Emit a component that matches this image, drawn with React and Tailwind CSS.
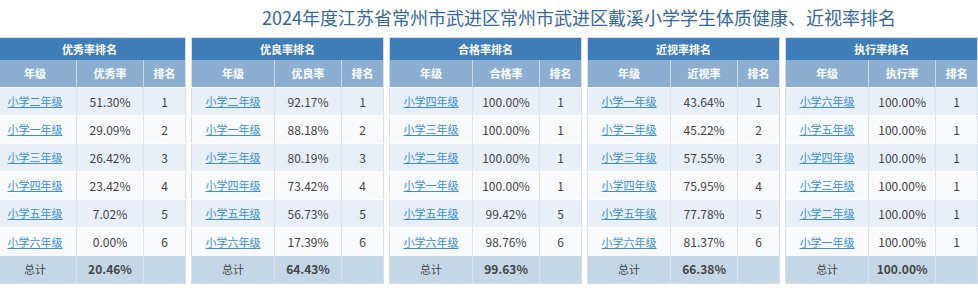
import React from 'react';

// Ranking tables shown under the title
const TABLES = [
  {
    title: '优秀率排名',
    rateLabel: '优秀率',
    total: '20.46%',
    rows: [
      ['小学二年级', '51.30%', 1],
      ['小学一年级', '29.09%', 2],
      ['小学三年级', '26.42%', 3],
      ['小学四年级', '23.42%', 4],
      ['小学五年级', '7.02%', 5],
      ['小学六年级', '0.00%', 6],
    ],
  },
  {
    title: '优良率排名',
    rateLabel: '优良率',
    total: '64.43%',
    rows: [
      ['小学二年级', '92.17%', 1],
      ['小学一年级', '88.18%', 2],
      ['小学三年级', '80.19%', 3],
      ['小学四年级', '73.42%', 4],
      ['小学五年级', '56.73%', 5],
      ['小学六年级', '17.39%', 6],
    ],
  },
  {
    title: '合格率排名',
    rateLabel: '合格率',
    total: '99.63%',
    rows: [
      ['小学四年级', '100.00%', 1],
      ['小学三年级', '100.00%', 1],
      ['小学二年级', '100.00%', 1],
      ['小学一年级', '100.00%', 1],
      ['小学五年级', '99.42%', 5],
      ['小学六年级', '98.76%', 6],
    ],
  },
  {
    title: '近视率排名',
    rateLabel: '近视率',
    total: '66.38%',
    rows: [
      ['小学一年级', '43.64%', 1],
      ['小学二年级', '45.22%', 2],
      ['小学三年级', '57.55%', 3],
      ['小学四年级', '75.95%', 4],
      ['小学五年级', '77.78%', 5],
      ['小学六年级', '81.37%', 6],
    ],
  },
  {
    title: '执行率排名',
    rateLabel: '执行率',
    total: '100.00%',
    rows: [
      ['小学六年级', '100.00%', 1],
      ['小学五年级', '100.00%', 1],
      ['小学四年级', '100.00%', 1],
      ['小学三年级', '100.00%', 1],
      ['小学二年级', '100.00%', 1],
      ['小学一年级', '100.00%', 1],
    ],
  },
];

function RankTable({ table }) {
  return (
    <table className="w-[192px] shrink-0 table-fixed border-collapse text-[12px] border border-[#d6dee7]">
      <colgroup>
        <col className="w-[83px]" />
        <col className="w-[67px]" />
        <col className="w-[42px]" />
      </colgroup>
      <thead className="text-[11px]">
        <tr className="h-[22px] bg-[#3f7db8]">
          <th colSpan={3} className="font-bold text-white text-center">
            {table.title}
          </th>
        </tr>
        <tr className="h-[28px] bg-[#8cafd1] text-white">
          <th className="font-bold border-r border-[#c9d9e8]">年级</th>
          <th className="font-bold border-r border-[#c9d9e8]">{table.rateLabel}</th>
          <th className="font-bold">排名</th>
        </tr>
      </thead>
      <tbody className="text-[#444]">
        {table.rows.map((row, i) => (
          <tr
            key={row[0]}
            className={`h-[28px] border-t border-white ${i % 2 === 0 ? 'bg-[#e9eff6]' : 'bg-[#f8fafc]'}`}
          >
            <td className="text-center text-[11px] border-r border-[#dde4ec]">
              <a href="#" className="text-[#3b8ed3] underline">{row[0]}</a>
            </td>
            <td className="text-center border-r border-[#dde4ec]">{row[1]}</td>
            <td className="text-center">{row[2]}</td>
          </tr>
        ))}
        <tr className="h-[28px] bg-[#c4d7e7]">
          <td className="text-center text-[11px] border-r border-[#d8e4ef]">总计</td>
          <td className="text-center font-bold border-r border-[#d8e4ef]">{table.total}</td>
          <td></td>
        </tr>
      </tbody>
    </table>
  );
}

export default function App() {
  return (
    <div
      className="w-[978px] h-[293px] overflow-hidden bg-white"
      style={{ fontFamily: '"Microsoft YaHei", "Noto Sans CJK SC", "Noto Sans", sans-serif' }}
    >
      <div className="h-[37px] pl-[262px] pt-[3px] text-[18px] leading-[28px] text-[#36679a] whitespace-nowrap">
        2024年度江苏省常州市武进区常州市武进区戴溪小学学生体质健康、近视率排名
      </div>
      <div className="flex gap-[5px] -ml-[7px]">
        {TABLES.map((t) => (
          <RankTable key={t.title} table={t} />
        ))}
      </div>
    </div>
  );
}
